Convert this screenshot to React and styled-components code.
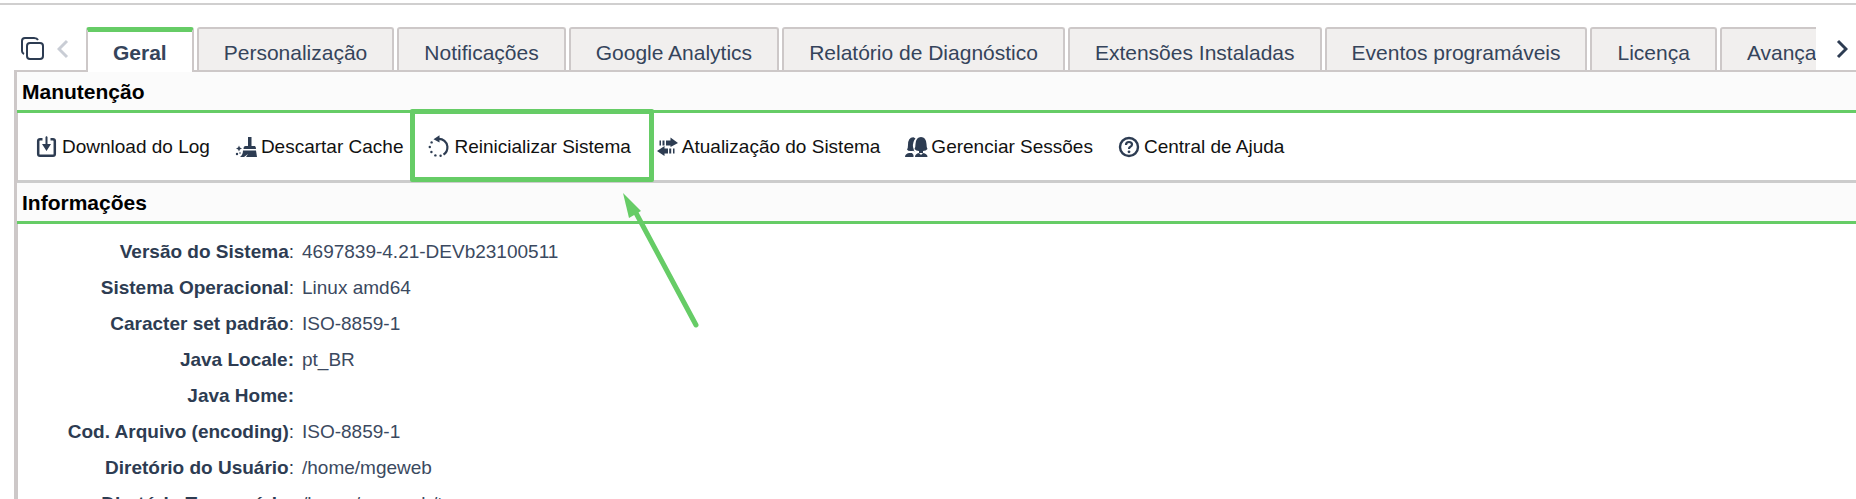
import styled, { createGlobalStyle, css } from "styled-components";

const GlobalStyle = createGlobalStyle`
  * {
    box-sizing: border-box;
  }

  body {
    margin: 0;
    background: #fff;
    color: #2d3c52;
    font-family: "Liberation Sans", Arial, sans-serif;
    font-size: 19px;
  }

  button {
    margin: 0;
    padding: 0;
    border: 0;
    background: none;
    color: inherit;
    font: inherit;
    cursor: pointer;
  }
`;

const Page = styled.div`
  height: 100vh;
  overflow: hidden;
  padding: 3px 0 0;
`;

const TopLine = styled.div`
  height: 2px;
  margin-bottom: 22px;
  background: #d0cfcf;
`;

// tabs
const TabBar = styled.nav`
  display: flex;
  height: 45px;
  margin-left: 14px;
  border-bottom: 2px solid #cdc8c8;
`;

const TabTools = styled.div`
  display: flex;
  flex: none;
  align-items: center;
  gap: 12px;
  width: 72px;
  padding-left: 6px;
`;

const TabList = styled.div`
  display: flex;
  flex: 1;
  gap: 3px;
  min-width: 0;
  height: 45px;
  overflow: hidden;
`;

const Tab = styled.button`
  flex: none;
  height: 43px;
  padding: 6px 25px 0;
  border: 2px solid #cdc8c8;
  border-bottom: 0;
  border-radius: 3px 3px 0 0;
  background: #f1efee;
  color: #35445b;
  font-size: 21px;
  white-space: nowrap;
`;

const ActiveTab = styled(Tab)`
  height: 45px;
  padding-top: 1px;
  border-top: 5px solid #66cc66;
  background: #fff;
  font-weight: bold;
`;

const IconButton = styled.button`
  display: flex;
  color: ${(props) => (props.$muted ? "#c9cdd5" : "#2d3c52")};
`;

const NextTab = styled(IconButton)`
  flex: none;
  align-items: center;
  justify-content: center;
  width: 40px;
  padding-left: 12px;
`;

// panels
const Panel = styled.main`
  margin-left: 14px;
  border-left: 3px solid #cdc8c8;
`;

const SectionTitle = styled.h2`
  height: 41px;
  margin: 0;
  padding-left: 5px;
  border-bottom: 3px solid #66cc66;
  background: #fbfbfb;
  color: #000;
  font-size: 21px;
  line-height: 40px;
`;

const Toolbar = styled.div`
  display: flex;
  align-items: center;
  gap: 25px;
  height: 70px;
  padding-left: 18px;
  border-left: 1px solid #cdc8c8;
  border-bottom: 3px solid #ccc;
`;

const Action = styled.button`
  position: relative;
  display: flex;
  align-items: center;
  gap: 4px;
  color: #111;
  white-space: nowrap;

  ${(props) =>
    props.$highlight &&
    css`
      &::before {
        content: "";
        position: absolute;
        inset: -27px -23px -24px -18px;
        border: 5px solid #66cc66;
        border-radius: 2px;
      }
    `}
`;

const ActionIcon = styled.svg`
  flex: none;
  width: 22px;
  height: 22px;
  color: #2d3c52;
`;

const Arrow = styled.svg`
  position: absolute;
  top: 57px;
  left: 193px;
  width: 80px;
  height: 140px;
  color: #66cc66;
  pointer-events: none;
`;

const Info = styled.div`
  padding-top: 10px;
  border-left: 1px solid #cdc8c8;
`;

const InfoTable = styled.table`
  border-collapse: collapse;

  th,
  td {
    height: 36px;
    padding: 0;
    white-space: nowrap;
  }

  th {
    width: 276px;
    text-align: right;
  }

  td {
    padding-left: 8px;
    color: #3b4960;
  }
`;

const Colon = styled.span`
  font-weight: ${(props) => (props.$bold ? "bold" : "normal")};
`;

const CopyIcon = () => (
  <svg width="25" height="25" viewBox="0 0 25 25" fill="none" stroke="currentColor" strokeWidth="2">
    <rect x="7" y="7" width="16" height="16" rx="3" />
    <path d="M4 18 Q2 17 2 15 V5 Q2 2 5 2 H14 Q17 2 18 4" />
  </svg>
);

const Chevron = ({ left }) => (
  <svg width="12" height="20" viewBox="0 0 12 20" fill="none" stroke="currentColor" strokeWidth="3">
    <path d={left ? "M10 2 L2 10 L10 18" : "M2 2 L10 10 L2 18"} />
  </svg>
);

const icons = {
  download: (
    <>
      <path
        d="M6.5 3.2 H4 Q2.2 3.2 2.2 5 V18 Q2.2 19.8 4 19.8 H17 Q18.8 19.8 18.8 18 V5 Q18.8 3.2 17 3.2 H14.5"
        fill="none"
        stroke="currentColor"
        strokeWidth="2.5"
      />
      <path d="M9.5 1 L10.5 0 L11.5 1 V8 H15 L10.5 15 L6 8 H9.5 Z" />
    </>
  ),
  broom: (
    <>
      <path d="M13 1 H16.5 V10 H20 Q21 11 21 13 H8.5 Q8.5 10 10.5 10 H13 Z" />
      <path d="M8 14.5 H21 L22 21 H11 L13 18 L9 21 H5 Q8 18.5 8 14.5 Z" />
      <path d="M4 9.5 L4.9 11.6 L7 12.5 L4.9 13.4 L4 15.5 L3.1 13.4 L1 12.5 L3.1 11.6 Z" />
      <circle cx="2" cy="18" r="1.2" />
      <circle cx="5" cy="17" r="0.8" />
    </>
  ),
  restart: (
    <>
      <path d="M10 3 C15 2.5 19 6 19.4 10.5 C19.6 14 18 17 15.5 18.6" fill="none" stroke="currentColor" strokeWidth="2.2" />
      <path d="M5.5 3.3 L11.5 -0.8 V6.6 Z" />
      <circle cx="3.6" cy="6.4" r="1.2" />
      <circle cx="1.8" cy="11" r="1.2" />
      <circle cx="3.4" cy="16" r="1.2" />
      <circle cx="7.4" cy="19.4" r="1.2" />
      <circle cx="12.6" cy="19.8" r="1.2" />
    </>
  ),
  swap: (
    <>
      <path d="M10 4.5 H14.5 V1.5 L22 7 L14.5 11 V9.5 H10 Z M3.5 4.5 H5 V9.5 H3.5 Z M6.5 4.5 H8.5 V9.5 H6.5 Z" />
      <path d="M12 12.5 H8.5 V10 L1 15 L8.5 20 V17.5 H12 Z M13.2 12.5 H15.2 V17.5 H13.2 Z M17 12.5 H18.5 V17.5 H17 Z" />
    </>
  ),
  users: (
    <>
      <path d="M10.5 2.5 Q7.5 6 8 11 L9.5 16 L8.5 14.8 L7 15 Q3 15.5 2 13.5 Q3 12 3 9 Q3 1 8.5 1.2 Z" />
      <path d="M16 1 Q21 1 21.5 8 Q21.5 11.5 22.5 13 Q21 14.8 18 15 V17 H14 V15 Q11 14.8 9.5 13 Q10.5 11.5 10.5 8 Q11 1 16 1 Z" />
      <path d="M4 17 H7 L8.5 19 V21 H0 Q0 17.8 4 17 Z" />
      <path d="M14 17 L16 19 L18 17 Q22.5 17.8 22.5 21 H10 Q10 17.8 14 17 Z" />
    </>
  ),
  help: (
    <>
      <circle cx="11" cy="11" r="9" fill="none" stroke="currentColor" strokeWidth="2.4" />
      <path d="M8 9 Q8 6 11 6 Q14 6 14 8.6 Q14 10 12.4 10.8 Q11 11.5 11 13" fill="none" stroke="currentColor" strokeWidth="2.2" />
      <circle cx="11" cy="15.8" r="1.4" />
    </>
  ),
};

const tabs = [
  "Personalização",
  "Notificações",
  "Google Analytics",
  "Relatório de Diagnóstico",
  "Extensões Instaladas",
  "Eventos programáveis",
  "Licença",
  "Avançado",
];

const actions = [
  { icon: "download", label: "Download do Log" },
  { icon: "broom", label: "Descartar Cache" },
  { icon: "restart", label: "Reinicializar Sistema", highlight: true },
  { icon: "swap", label: "Atualização do Sistema" },
  { icon: "users", label: "Gerenciar Sessões" },
  { icon: "help", label: "Central de Ajuda" },
];

const info = [
  { label: "Versão do Sistema", value: "4697839-4.21-DEVb23100511" },
  { label: "Sistema Operacional", value: "Linux amd64" },
  { label: "Caracter set padrão", value: "ISO-8859-1" },
  { label: "Java Locale", value: "pt_BR", bold: true },
  { label: "Java Home", value: "", bold: true },
  { label: "Cod. Arquivo (encoding)", value: "ISO-8859-1" },
  { label: "Diretório do Usuário", value: "/home/mgeweb" },
  { label: "Diretório Temporário", value: "/home/mgeweb/tmp" },
];

function App() {
  return (
    <Page>
      <GlobalStyle />
      <TopLine />
      <TabBar>
        <TabTools>
          <IconButton aria-label="Copiar">
            <CopyIcon />
          </IconButton>
          <IconButton $muted aria-label="Anterior">
            <Chevron left />
          </IconButton>
        </TabTools>
        <TabList>
          <ActiveTab>Geral</ActiveTab>
          {tabs.map((name) => (
            <Tab key={name}>{name}</Tab>
          ))}
        </TabList>
        <NextTab aria-label="Próximo">
          <Chevron />
        </NextTab>
      </TabBar>
      <Panel>
        <SectionTitle>Manutenção</SectionTitle>
        <Toolbar>
          {actions.map(({ icon, label, highlight }) => (
            <Action key={icon} $highlight={highlight}>
              <ActionIcon viewBox="0 0 22 22" fill="currentColor" overflow="visible">
                {icons[icon]}
              </ActionIcon>
              {label}
              {highlight && (
                <Arrow viewBox="0 0 80 140" fill="currentColor">
                  <path d="M15 20 L75 132" stroke="currentColor" strokeWidth="5" strokeLinecap="round" />
                  <path d="M2 0 L20 18 L8 25 Z" />
                </Arrow>
              )}
            </Action>
          ))}
        </Toolbar>
        <SectionTitle>Informações</SectionTitle>
        <Info>
          <InfoTable>
            <tbody>
              {info.map(({ label, value, bold }) => (
                <tr key={label}>
                  <th scope="row">
                    {label}
                    <Colon $bold={bold}>:</Colon>
                  </th>
                  <td>{value}</td>
                </tr>
              ))}
            </tbody>
          </InfoTable>
        </Info>
      </Panel>
    </Page>
  );
}

export default App;
